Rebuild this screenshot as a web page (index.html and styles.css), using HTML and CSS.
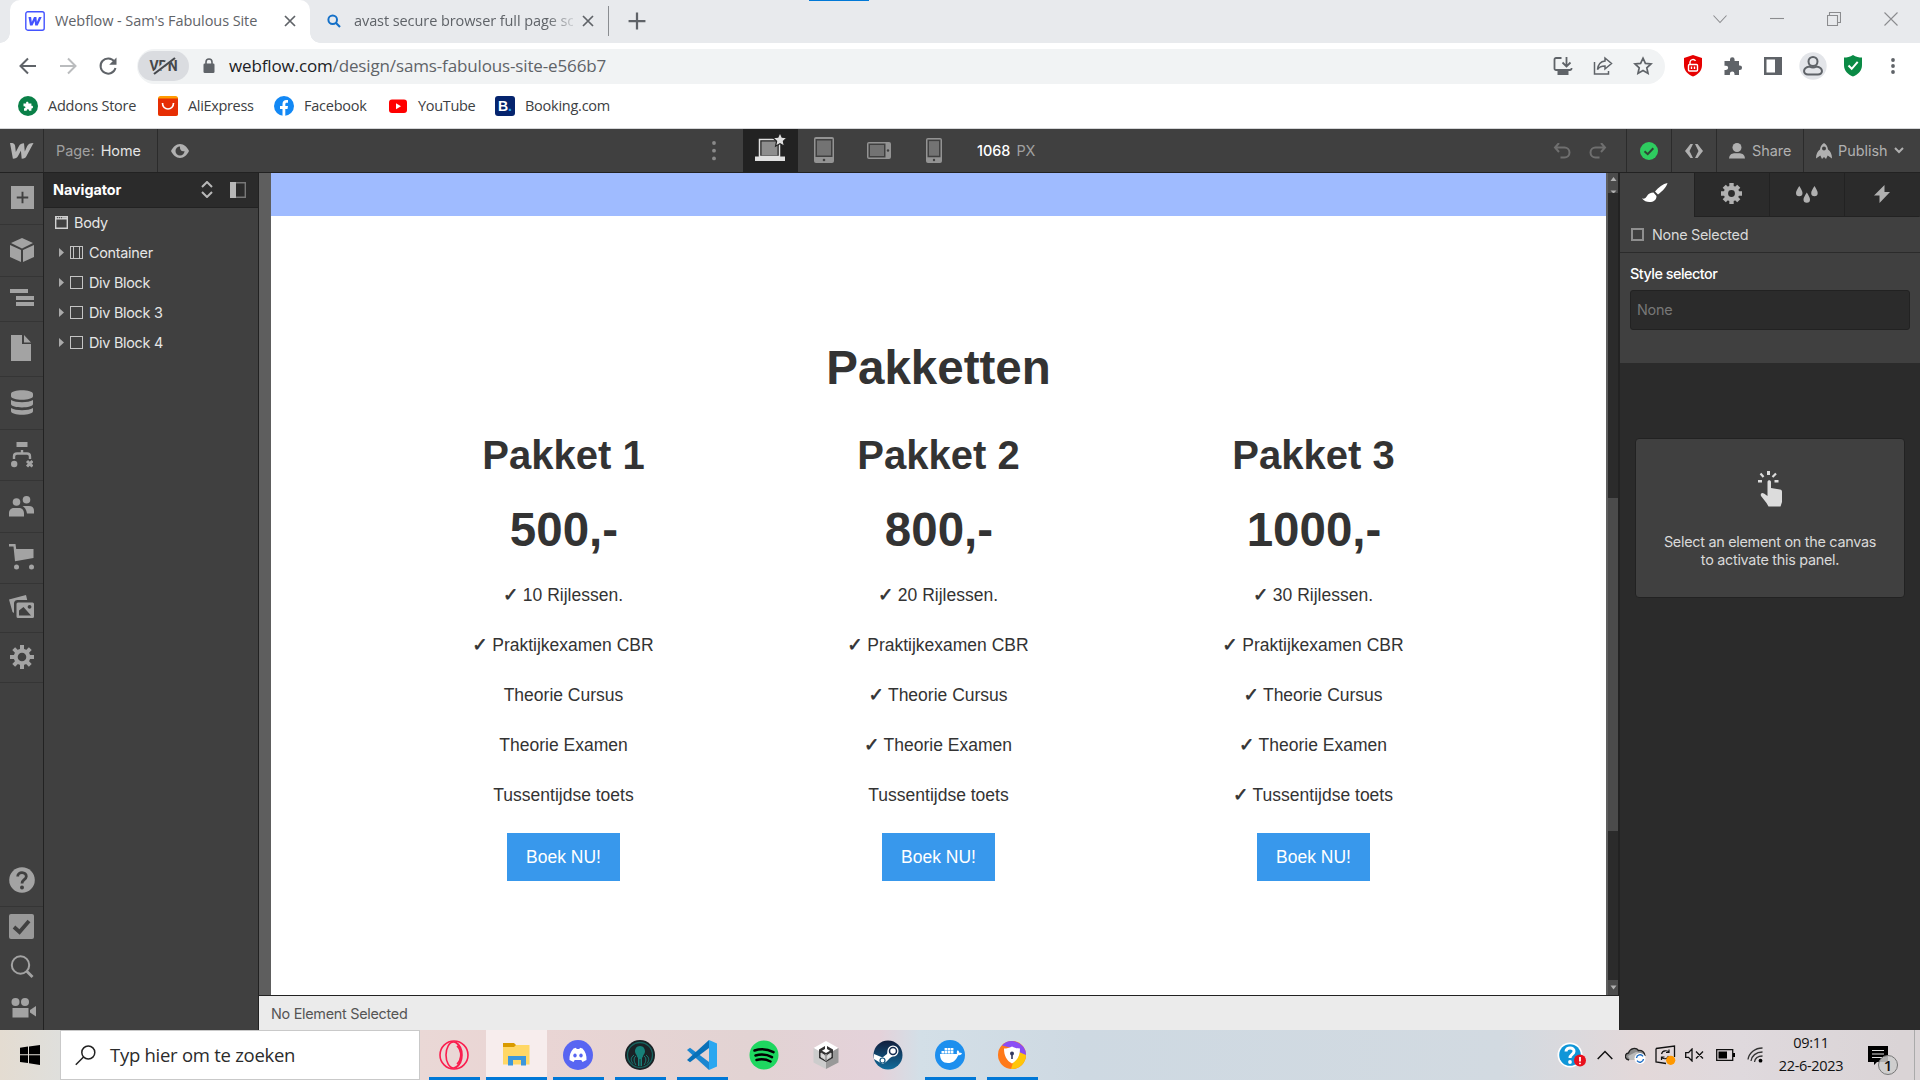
FILE: index.html
```html
<!DOCTYPE html>
<html lang="nl">
<head>
<meta charset="utf-8">
<title>Webflow - Sam's Fabulous Site</title>
<link rel="stylesheet" href="styles.css">
</head>
<body>
<div class="screen">
  <header class="browser">
    <div class="tabstrip">
      <div class="loading"></div>
      <div class="tab active">
        <svg class="favicon" width="20" height="20" viewBox="0 0 20 20"><rect x=".8" y=".8" width="18.4" height="18.4" rx="2" fill="#fff" stroke="#4353ff" stroke-width="1.4"/><path d="M3.500 6h2.600l.7 5L9 6h2.400l.5 5L14 6h2.700l-4 8.500h-2.500l-.6-4.500-2.100 4.500H5z" fill="#4353ff"/></svg>
        <span class="tab-title t-first">Webflow - Sam's Fabulous Site</span>
        <svg class="x" width="12" height="12" viewBox="0 0 12 12"><path d="M1 1l10 10M11 1L1 11" stroke="#5f6368" stroke-width="1.700"/></svg>
      </div>
      <div class="tab">
        <svg class="favicon" width="14" height="14" viewBox="0 0 14 14"><circle cx="5.700" cy="5.700" r="4.300" fill="none" stroke="#1470c8" stroke-width="2"/><path d="M9 9l4 4" stroke="#1470c8" stroke-width="2.200"/></svg>
        <span class="tab-title t-second">avast secure browser full page sc</span>
        <svg class="x" width="12" height="12" viewBox="0 0 12 12"><path d="M1 1l10 10M11 1L1 11" stroke="#5f6368" stroke-width="1.700"/></svg>
      </div>
      <svg class="newtab" width="16" height="16" viewBox="0 0 16 16"><path d="M8 .5v15M.5 8h15" stroke="#5f6368" stroke-width="2"/></svg>
      <div class="winctl">
        <svg width="14" height="14" viewBox="0 0 14 14"><path d="M.5 3.500l6.500 7 6.500-7"/></svg>
        <svg width="14" height="14" viewBox="0 0 14 14"><path d="M0 6.500h14"/></svg>
        <svg width="14" height="14" viewBox="0 0 14 14"><path d="M.5 3.500h10v10h-10zM2.500 3.500v-3h11v10h-3"/></svg>
        <svg width="14" height="14" viewBox="0 0 14 14"><path d="M.5.5l13 13M13.500.5l-13 13"/></svg>
      </div>
    </div>

    <div class="navbar">
      <div class="navbtns">
        <svg width="20" height="20" viewBox="0 0 20 20" fill="none" stroke="#5f6368" stroke-width="2"><path d="M18 10H3M10 2.500L2.500 10l7.500 7.500"/></svg>
        <svg width="20" height="20" viewBox="0 0 20 20" fill="none" stroke="#babcbe" stroke-width="2"><path d="M2 10h15M10 2.500l7.500 7.500-7.500 7.500"/></svg>
        <svg width="20" height="20" viewBox="0 0 20 20"><path d="M16.300 5.500A7.600 7.600 0 1 0 17.500 12" fill="none" stroke="#5f6368" stroke-width="2"/><path d="M18.500 1.500v7.300h-7.300z" fill="#5f6368"/></svg>
      </div>
      <div class="omnibox">
        <div class="vpn"><span>VPN</span><svg width="28" height="20" viewBox="0 0 28 20"><path d="M3 18L24 1" stroke="#dadce0" stroke-width="4"/><path d="M4 18L25 2" stroke="#45484c" stroke-width="2.200"/></svg></div>
        <svg class="lock" width="12" height="16" viewBox="0 0 12 16"><rect x=".5" y="5.500" width="11" height="9.500" rx="1.300" fill="#5f6368"/><path d="M3 6V4a3 3 0 0 1 6 0v2" fill="none" stroke="#5f6368" stroke-width="1.600"/></svg>
        <span class="url"><b>webflow.com</b>/design/sams-fabulous-site-e566b7</span>
        <div class="cells">
          <i><svg width="20" height="20" viewBox="0 0 20 20" fill="none" stroke="#5f6368" stroke-width="1.800"><path d="M8.500 2H3a1.500 1.500 0 0 0-1.500 1.500v9A1.500 1.500 0 0 0 3 14h14a1.500 1.500 0 0 0 1.500-1.500V12"/><path d="M4.500 17h11" stroke-width="4"/><path d="M13.500 1v9M9.500 6.500l4 4 4-4"/></svg></i>
          <i><svg width="20" height="20" viewBox="0 0 20 20" fill="none" stroke="#5f6368" stroke-width="1.500"><path d="M1.500 6v12h14v-3"/><path d="M12 2l6.500 5.500L12 13V10C8 10 6 11 4.500 13.500 5 9 7.500 5.500 12 5z"/></svg></i>
          <i><svg width="20" height="20" viewBox="0 0 20 20"><path d="M10 2.200l2.400 5.200 5.600.6-4.200 3.800 1.200 5.600-5-2.900-5 2.900 1.200-5.600L2 8l5.600-.6z" fill="none" stroke="#5f6368" stroke-width="1.700"/></svg></i>
        </div>
      </div>
      <div class="cells ext">
        <i><svg width="20" height="22" viewBox="0 0 20 22"><path d="M10 0l9 3v7c0 6-4 9.500-9 11.500C5 19.500 1 16 1 10V3z" fill="#e60000"/><rect x="5.500" y="9.500" width="9" height="6.500" rx="1" fill="none" stroke="#fff" stroke-width="1.400"/><path d="M7 9V7a3 2.800 0 0 1 5.500-1.200M8.500 11.500v2.500M11.500 11.500v2.500" fill="none" stroke="#fff" stroke-width="1.400"/></svg></i>
        <i><svg width="20" height="20" viewBox="0 0 20 20"><path d="M2 5h5V3.500a2.300 2.300 0 0 1 4.600 0V5H16v4.500h.8a2.200 2.200 0 0 1 0 4.500H16v5h-4.500v-1.200a2.300 2.300 0 0 0-4.600 0V19H1.500v-5H3a2.100 2.100 0 0 0 0-4.300H1.500V5z" fill="#5f6368"/></svg></i>
        <i><svg width="18" height="18" viewBox="0 0 18 18"><path d="M0 0h18v18H0zM2.500 2.500v13h8.500v-13z" fill="#5f6368" fill-rule="evenodd"/></svg></i>
        <i><svg width="28" height="28" viewBox="0 0 28 28"><circle cx="14" cy="14" r="13.700" fill="#e3e5e9"/><g fill="none" stroke="#5f6368" stroke-width="2"><circle cx="14" cy="9.500" r="4.500"/><path d="M10.500 14.500C3 16 4 22.500 9 22.500h10c5 0 6-6.500-1.500-8-2.500 1.500-4.500 1.500-7 0z"/></g></svg></i>
        <i><svg width="20" height="22" viewBox="0 0 20 22"><path d="M10 0C7 2 4 2.500 1 2.500V10c0 6 4 9.500 9 11.500 5-2 9-5.500 9-11.500V2.500C16 2.500 13 2 10 0z" fill="#0a8a45"/><path d="M5.500 10.500l3.200 3.300 6-7" fill="none" stroke="#fff" stroke-width="2"/></svg></i>
        <i><svg width="6" height="18" viewBox="0 0 6 18" fill="#5f6368"><circle cx="3" cy="3" r="1.900"/><circle cx="3" cy="9" r="1.900"/><circle cx="3" cy="15" r="1.900"/></svg></i>
      </div>
    </div>

    <div class="bookmarks">
      <div class="bm b1"><svg width="20" height="20" viewBox="0 0 20 20"><circle cx="10" cy="10" r="10" fill="#0a8048"/><path d="M5.500 7.500h2.700c-1-2.500 3-2.500 2.200 0h3v2.400c2.200-.5 2.200 3 0 2.500v2.400h-2.400c.3-2-2.600-2-2.300 0H6v-2.600c2 .3 2-2.300-.5-2z" fill="#fff"/></svg><span>Addons Store</span></div>
      <div class="bm b2"><svg width="20" height="20" viewBox="0 0 20 20"><rect width="20" height="20" rx="2.500" fill="#ff9b00"/><path d="M0 2.500h20v15a2.500 2.500 0 0 1-2.500 2.500h-15A2.500 2.500 0 0 1 0 17.500z" fill="#e62e04"/><path d="M4.500 7c0 8 11 8 11 0" fill="none" stroke="#fff" stroke-width="1.700"/></svg><span>AliExpress</span></div>
      <div class="bm b3"><svg width="20" height="20" viewBox="0 0 20 20"><circle cx="10" cy="10" r="10" fill="#1288f5"/><path d="M8.500 20v-7H6v-3h2.500V8c0-2.700 1.600-4 3.800-4 .9 0 1.700.1 1.700.1v2.600h-1.200c-1.100 0-1.500.7-1.500 1.400V10h2.700l-.5 3h-2.200v7z" fill="#fff"/></svg><span>Facebook</span></div>
      <div class="bm b4"><svg width="20" height="20" viewBox="0 0 20 20"><rect x="1" y="3.500" width="18" height="13.500" rx="3" fill="#f00"/><path d="M8 7.200v6l5-3z" fill="#fff"/></svg><span>YouTube</span></div>
      <div class="bm b5"><div class="booking">B<em>.</em></div><span>Booking.com</span></div>
    </div>
  </header>

  <div class="topbar">
    <div class="cell logo"><svg width="24" height="16" viewBox="0 0 24 16"><path d="M0 0c3.500-.5 5 1 5.200 3.500L5.800 9 9 3C10 1 11.500.2 14 .2l.8 8.300L17 3.500C18 1 20 0 23.500 0l-7 13c-.8 1.700-2 2.700-4.800 2.800l-.8-8-3 5.500c-.8 1.600-2.200 2.500-5 2.500z" fill="#b5b5b5"/></svg></div>
    <div class="cell page"><span class="dim">Page:</span><span class="home">Home</span></div>
    <svg class="eye" width="18" height="14" viewBox="0 0 18 14"><path d="M9 0c4 0 7 3 9 7-2 4-5 7-9 7s-7-3-9-7c2-4 5-7 9-7zm0 2.500A4.500 4.500 0 1 0 13.500 7C11 8 8.500 6 9 2.500z" fill="#b0b0b0" fill-rule="evenodd"/></svg>
    <svg class="dots" width="4" height="22" viewBox="0 0 4 22" fill="#8a8a8a"><circle cx="2" cy="3" r="1.900"/><circle cx="2" cy="10.700" r="1.900"/><circle cx="2" cy="18.400" r="1.900"/></svg>
    <div class="devices">
      <div class="dev on"><svg width="32" height="32" viewBox="0 0 32 32"><path d="M5.500 7.500h20v17h-20z" fill="#222" stroke="#e0e0e0" stroke-width="1.500"/><path d="M7.500 9.500h16v14h-16z" fill="#8e8e8e"/><path d="M1 24.500h30v4.500H1z" fill="#e0e0e0"/><path d="M26 .5l2.100 4.600 5 .6-3.700 3.500 1 5L26 11.700l-4.400 2.500 1-5-3.700-3.500 5-.6z" fill="#e0e0e0" stroke="#222" stroke-width="1.200"/></svg></div>
      <div class="dev"><svg width="22" height="28" viewBox="0 0 22 28"><rect x="1" y="1" width="20" height="26" rx="2" fill="#939393"/><path d="M2.500 3h17v18h-17z" fill="#404040"/><path d="M4 4.500h14v15H4z" fill="#737373"/><circle cx="11" cy="24" r="1.300" fill="#404040"/></svg></div>
      <div class="dev"><svg width="24" height="17" viewBox="0 0 24 17"><rect width="24" height="17" rx="2" fill="#939393"/><path d="M1.500 1.500h17v14h-17z" fill="#404040"/><path d="M3 3h14v11H3z" fill="#737373"/><circle cx="21" cy="8.500" r="1.200" fill="#404040"/></svg></div>
      <div class="dev"><svg width="16" height="25" viewBox="0 0 16 24" preserveAspectRatio="none"><rect width="16" height="24" rx="2" fill="#939393"/><path d="M1.500 1.500h13v17h-13z" fill="#404040"/><path d="M3 3h10v14H3z" fill="#737373"/><circle cx="8" cy="21" r="1.200" fill="#404040"/></svg></div>
    </div>
    <div class="width"><b>1068</b><span class="dim">PX</span></div>
    <div class="history">
      <svg width="18" height="16" viewBox="0 0 18 16"><path d="M2 4.500h9.500a5 5 0 0 1 0 10H7.500M6 0L2 4.500 6 9" fill="none" stroke="#6f6f6f" stroke-width="2"/></svg>
      <svg width="18" height="16" viewBox="0 0 18 16"><path d="M16 4.500H6.500a5 5 0 0 0 0 10h4M12 0l4 4.500L12 9" fill="none" stroke="#6f6f6f" stroke-width="2"/></svg>
    </div>
    <div class="cell ok"><svg width="18" height="18" viewBox="0 0 18 18"><circle cx="9" cy="9" r="9" fill="#2ecc5f"/><path d="M4.500 9.200l3.200 3 5.600-6" fill="none" stroke="#2f4535" stroke-width="2"/></svg></div>
    <div class="cell code"><svg width="18" height="14" viewBox="0 0 18 14"><path d="M5.500 0H8L4.500 7 8 14H5.500L0 7zM12.500 0H10l3.500 7-3.500 7h2.500L18 7z" fill="#b0b0b0"/></svg></div>
    <div class="cell share"><svg width="16" height="16" viewBox="0 0 16 16" fill="#b0b0b0"><circle cx="8" cy="4.500" r="4.500"/><path d="M0 15.500c.5-4 2.500-5 5-5.300h6c2.500.3 4.500 1.300 5 5.300z"/></svg><span>Share</span></div>
    <div class="cell publish"><svg width="16" height="16" viewBox="0 0 16 16"><path d="M8 0c2.500 1.500 3.700 3.500 4 6.500 2.500 1.500 4 4.500 4 9l-4.300-3L10 16l-2-2-2 2-1.700-3.500-4.300 3c0-4.500 1.500-7.500 4-9C4.300 3.500 5.500 1.500 8 0zm0 3.500a2 2 0 0 0 0 4 2 2 0 0 0 0-4z" fill="#b0b0b0" fill-rule="evenodd"/></svg><span>Publish</span><svg width="10" height="7" viewBox="0 0 10 7"><path d="M1 1l4 4 4-4" fill="none" stroke="#b0b0b0" stroke-width="2"/></svg></div>
  </div>

  <main class="work">
    <nav class="rail">
      <div class="r1"><svg width="23" height="23" viewBox="0 0 24 24"><path d="M0 0h24v24H0zM11 6v5H6v2h5v5h2v-5h5v-2h-5V6z" fill-rule="evenodd"/></svg></div>
      <div class="r2"><svg width="24" height="24" viewBox="0 0 24 24"><path d="M12 0l11 5-11 5.500L1 5zM0 7l11 5v12L0 19zM24 7l-11 5v12l11-5z"/></svg></div>
      <div class="r3"><svg width="24" height="18" viewBox="0 0 24 18"><path d="M0 0h18v4H0zM6 7h18v4H6zM6 13h18v4H6z"/></svg></div>
      <div class="r4"><svg width="20" height="26" viewBox="0 0 20 26"><path d="M0 0h11v9h9v17H0zM13 0l7 7.500h-7z"/></svg></div>
      <div class="r5"><svg width="22" height="25" viewBox="0 0 22 25"><path d="M0 4c0-5 22-5 22 0v2c0 5-22 5-22 0zM0 10c5 3 17 3 22 0v4c0 4.500-22 4.500-22 0zM0 18c5 3 17 3 22 0v3c0 5-22 5-22 0z"/></svg></div>
      <div class="r6"><svg width="22" height="26" viewBox="0 0 22 26"><path d="M5.500 0h11v5h-11z"/><path d="M3 17v-2.500c0-2 1-3 3-3h10c2 0 3 1 3 3V17M11 8v3" fill="none" stroke="#a3a3a3" stroke-width="2.400"/><circle cx="3.200" cy="22" r="3.200"/><path d="M16 19l5.500 5.500M21.500 19L16 24.500" stroke="#a3a3a3" stroke-width="3"/></svg></div>
      <div class="r7"><svg width="26" height="21" viewBox="0 0 26 21"><circle cx="7.500" cy="6" r="3.800"/><circle cx="17.500" cy="3.800" r="3.800"/><path d="M0 20.500v-3c0-4 2.500-5.500 5-5.500h5c2.500 0 5 1.500 5 5.500v3zM13.500 10H20c3.500 0 5 2 5 5v2.500h-7C17.500 14 16 11.500 13.500 10z"/></svg></div>
      <div class="r8"><svg width="26" height="26" viewBox="0 0 26 26"><path d="M0 0h6.500l.7 5H24.500v9L6 17.300 4.500 2.500H0z"/><circle cx="7.500" cy="23" r="2.500"/><circle cx="22.500" cy="23" r="2.500"/></svg></div>
      <div class="r9"><svg width="26" height="24" viewBox="0 0 26 24"><path d="M0 4.500L17 0l1.200 5H9.500C6 5 5 6.500 5 9v9L3.500 17z"/><path d="M9 7.500h14.500A1.500 1.500 0 0 1 25 9v12.500a1.500 1.500 0 0 1-1.500 1.500H9a1.500 1.500 0 0 1-1.500-1.500V9A1.500 1.500 0 0 1 9 7.500zM10 20.500h12l-7.500-8.500L10 15.500zM20.500 10a1.900 1.900 0 1 0 .1 0z" fill-rule="evenodd"/></svg></div>
      <div class="r10"><svg width="24" height="24" viewBox="0 0 24 24"><circle cx="12" cy="12" r="6.300" fill="none" stroke="#a3a3a3" stroke-width="4"/><path d="M12 0v5M12 19v5M0 12h5M19 12h5M3.700 3.700L7 7M17 17l3.300 3.300M3.700 20.300L7 17M17 7l3.300-3.300" stroke="#a3a3a3" stroke-width="4"/></svg></div>
      <div class="rhelp"><svg width="26" height="26" viewBox="0 0 26 26"><circle cx="13" cy="13" r="12.800"/><path d="M8.700 9.500c0-5.500 8.800-5 8.600 0-.2 3.500-4.300 3-4.300 7" fill="none" stroke="#404040" stroke-width="2.800"/><circle cx="13" cy="20.500" r="2" fill="#404040"/></svg></div>
      <div class="raud"><svg width="25" height="25" viewBox="0 0 25 25"><rect width="25" height="25" rx="2" fill="#999"/><path d="M5 13l5.500 5L20 7" fill="none" stroke="#404040" stroke-width="3.800"/></svg></div>
      <div class="rsearch"><svg width="24" height="24" viewBox="0 0 24 24" stroke="#a3a3a3"><circle cx="10.500" cy="10" r="8.700" stroke-width="2"/><path d="M16.500 16l6 6" stroke-width="2.800"/></svg></div>
      <div class="rcam"><svg width="26" height="20" viewBox="0 0 26 20"><circle cx="4.500" cy="4" r="4"/><circle cx="14" cy="4" r="4"/><path d="M1.500 10h16v9.500h-16zM19 12l6-4v10.500l-6-4z"/></svg></div>
    </nav>

    <aside class="navigator">
      <div class="nav-head"><b>Navigator</b>
        <svg class="updown" width="12" height="17" viewBox="0 0 12 17"><path d="M1 6l5-5 5 5M1 11l5 5 5-5" fill="none" stroke="#b8b8b8" stroke-width="2"/></svg>
        <svg width="16" height="16" viewBox="0 0 16 16"><path d="M0 0h6v16H0z" fill="#b8b8b8"/><path d="M6 .7h9.300v14.600H6" fill="none" stroke="#777" stroke-width="1.400"/></svg>
      </div>
      <div class="node root"><svg width="13" height="13" viewBox="0 0 13 13"><path d="M.7.7h11.600v11.600H.7z" fill="none" stroke="#d0d0d0" stroke-width="1.400"/><path d="M1 1.500h11v2H1z" fill="#d0d0d0"/><path d="M2 1.700h1M4 1.700h1M6 1.700h1" stroke="#404040"/></svg>Body</div>
      <div class="node"><svg class="arr" width="5" height="9" viewBox="0 0 5 9"><path d="M0 0l5 4.500L0 9z" fill="#aaa"/></svg><span class="box container"></span>Container</div>
      <div class="node"><svg class="arr" width="5" height="9" viewBox="0 0 5 9"><path d="M0 0l5 4.500L0 9z" fill="#aaa"/></svg><span class="box"></span>Div Block</div>
      <div class="node"><svg class="arr" width="5" height="9" viewBox="0 0 5 9"><path d="M0 0l5 4.500L0 9z" fill="#aaa"/></svg><span class="box"></span>Div Block 3</div>
      <div class="node"><svg class="arr" width="5" height="9" viewBox="0 0 5 9"><path d="M0 0l5 4.500L0 9z" fill="#aaa"/></svg><span class="box"></span>Div Block 4</div>
    </aside>

    <section class="stage">
      <div class="viewport">
        <div class="site">
          <div class="band"></div>
          <h1 class="title">Pakketten</h1>
          <div class="packs">
            <div class="pack"><h2>Pakket 1</h2><h1>500,-</h1>
              <p><i>✓</i> 10 Rijlessen.</p><p><i>✓</i> Praktijkexamen CBR</p><p>Theorie Cursus</p><p>Theorie Examen</p><p>Tussentijdse toets</p><a class="btn">Boek NU!</a></div>
            <div class="pack"><h2>Pakket 2</h2><h1>800,-</h1>
              <p><i>✓</i> 20 Rijlessen.</p><p><i>✓</i> Praktijkexamen CBR</p><p><i>✓</i> Theorie Cursus</p><p><i>✓</i> Theorie Examen</p><p>Tussentijdse toets</p><a class="btn">Boek NU!</a></div>
            <div class="pack"><h2>Pakket 3</h2><h1>1000,-</h1>
              <p><i>✓</i> 30 Rijlessen.</p><p><i>✓</i> Praktijkexamen CBR</p><p><i>✓</i> Theorie Cursus</p><p><i>✓</i> Theorie Examen</p><p><i>✓</i> Tussentijdse toets</p><a class="btn">Boek NU!</a></div>
          </div>
        </div>
        <div class="scroll">
          <div class="up"><svg width="11" height="20" viewBox="0 0 11 20" fill="#b0b0b0"><path d="M2.500 8L5.500 4l3 4zM2.500 17.500h6l-3 3z"/></svg></div>
          <div class="thumb"></div>
          <div class="down"><svg width="11" height="15" viewBox="0 0 11 15"><path d="M2.500 5.500h6l-3 4z" fill="#b0b0b0"/></svg></div>
        </div>
      </div>
      <div class="status">No Element Selected</div>
    </section>

    <aside class="style">
      <div class="stabs">
        <div class="on"><svg width="26" height="20" viewBox="0 0 26 20" fill="#fff"><path d="M25.500 0c-1 4-5 8-9.500 11.500L13 8.500C16.500 4 21 1 25.500 0zM11.500 9.500l3 3.500c0 4-3 6-7 6-3 0-5.500-1-7.500-3.500 2.500.5 4-.5 5-2.500 1.200-2.200 3.500-3.500 6.500-3.500z"/></svg></div>
        <div><svg width="21" height="21" viewBox="0 0 24 24"><circle cx="12" cy="12" r="6.400" fill="none" stroke="#b0b0b0" stroke-width="5"/><path d="M12 0v5M12 19v5M0 12h5M19 12h5M3.700 3.700L7 7M17 17l3.300 3.300M3.700 20.300L7 17M17 7l3.300-3.300" stroke="#b0b0b0" stroke-width="5"/></svg></div>
        <div><svg width="22" height="18" viewBox="0 0 22 18" fill="#b0b0b0"><path d="M3.300 1C5 4 6.500 6 6.500 8a3.200 3.200 0 0 1-6.500 0c0-2 1.500-4 3.300-7zM18.500 1c1.700 3 3.200 5 3.200 7a3.200 3.200 0 0 1-6.500 0c0-2 1.500-4 3.300-7zM10.800 7.500c1.700 3 3.200 5 3.200 7a3.200 3.200 0 0 1-6.500 0c0-2 1.500-4 3.300-7z"/></svg></div>
        <div><svg width="16" height="18" viewBox="0 0 16 18"><path d="M10.500 0v7H16L5.500 18v-7.500H0z" fill="#b0b0b0"/></svg></div>
      </div>
      <div class="none-row"><span class="box grey"></span>None Selected</div>
      <div class="selector"><div class="label">Style selector</div><div class="field">None</div></div>
      <div class="hint">
        <svg width="25" height="36" viewBox="0 0 25 36" fill="#dcdcdc"><path d="M9 0h3v4H9zM0 9h4v2.500H0zM16.500 9h4v2.500h-4z"/><path d="M2.500 2.500L5.500 6M18 2.500L14.500 6" stroke="#dcdcdc" stroke-width="2.200"/><path d="M9.500 11c0-2.500 3.500-2.500 3.500 0v6l9 1.500c1.500.3 2 1 2 2.500V31l-1.500 4.500H10.500L8.500 32 3 25c-1-2.500 1-4 3-2.500l3.500 2.500z"/></svg>
        <p>Select an element on the canvas<br>to activate this panel.</p>
      </div>
    </aside>
  </main>

  <footer class="taskbar">
    <div class="start"><svg width="20" height="20" viewBox="0 0 20 20"><path d="M0 2.800L8 1.600v7.700H0zM9 1.500L20 0v9.300H9zM0 10.300h8V18L0 16.900zM9 10.300h11V20L9 18.200z"/></svg></div>
    <div class="search"><svg width="21" height="21" viewBox="0 0 21 21" fill="none" stroke="#222" stroke-width="1.500"><circle cx="13.300" cy="7.500" r="6.500"/><path d="M8.500 12L.8 19.800"/></svg><span>Typ hier om te zoeken</span></div>
    <div class="apps">
      <div class="app run"><svg viewBox="0 0 30 30" fill="none" stroke="#fa1e4e" stroke-width="1.600"><circle cx="15" cy="15" r="14"/><ellipse cx="14.500" cy="15" rx="7.500" ry="13"/><path d="M17 2.500c8 5 8 20 0 25M18 6c5 5 5 13 0 18"/></svg></div>
      <div class="app run active"><svg viewBox="0 0 30 30"><path d="M2 3h11l3 3v4H2z" fill="#d99a00"/><path d="M2 7h11l2-2h13.500v19.500H2z" fill="#ffd766"/><path d="M7 25.500V16h18v9.500h-5V20h-8v5.500z" fill="#3d97dc"/></svg></div>
      <div class="app run"><svg viewBox="0 0 30 30"><circle cx="15" cy="15" r="15" fill="#5865f2"/><path d="M10.500 8.500l2.500-.7.7 1.200h2.600l.7-1.200 2.500.7c3 3 4.300 7 4 11.500l-4 2-1.200-2h-6.600l-1.200 2-4-2c-.3-4.500 1-8.500 4-11.500z" fill="#fff"/><ellipse cx="12" cy="15.500" rx="1.700" ry="2" fill="#5865f2"/><ellipse cx="18" cy="15.500" rx="1.700" ry="2" fill="#5865f2"/></svg></div>
      <div class="app run"><svg viewBox="0 0 30 30"><circle cx="15" cy="15" r="15" fill="#1b2226"/><circle cx="15" cy="15" r="12.500" fill="none" stroke="#17635e" stroke-width="1.300"/><path d="M15 6c3.500 0 5 3 5 5.500 0 2.500-2 3-2 5l-1 1.500v8h-1.500v-7h-1v7H13v-8l-1-1.500c0-2-2-2.500-2-5C10 9 11.500 6 15 6z" fill="#178079"/><path d="M11 16c-3 2-2 6 0 9M19 16c3 2 2 6 0 9M9 15c-4 3-3 6-1 8.500M21 15c4 3 3 6 1 8.500" fill="none" stroke="#178079"/></svg></div>
      <div class="app run"><svg viewBox="0 0 30 30"><path d="M22 0l8 3.500v23L22 30z" fill="#2aa7f0"/><path d="M0 10l3-2.300L22 22v8z" fill="#1a86d0"/><path d="M0 20l3 2.300L22 8V0z" fill="#0870b8"/></svg></div>
      <div class="app"><svg viewBox="0 0 30 30"><circle cx="15" cy="15" r="14.500" fill="#1ed760"/><path d="M5.500 10.500c6-2 13-1.500 19 1.700M6.500 15.500c5.500-1.500 11.500-1 16.500 1.700M7.500 20c5-1.300 9.500-.8 14 1.500" fill="none" stroke="#000" stroke-width="2.500" stroke-linecap="round"/></svg></div>
      <div class="app"><svg viewBox="0 0 30 30"><path d="M15 1l12.500 7L15 15 2.500 8z" fill="#fff"/><path d="M2.500 8L15 15v14L2.500 22.500z" fill="#ccc"/><path d="M27.500 8L15 15v14l12.500-6.500z" fill="#999"/><path d="M14 6l-6 3.500v8.500l7 4 7-4V9.500L16 6v3l3 1.700-4 2.300-4-2.300L14 9z" fill="#333"/><path d="M15 14v7M10 13l4 2.500v4L10 17zM20 13l-4 2.500v4l4-2.500z" fill="#ddd" stroke="#ccc"/></svg></div>
      <div class="app"><svg viewBox="0 0 30 30"><defs><linearGradient id="steam" x2="0" y2="1"><stop stop-color="#111d3c"/><stop offset="1" stop-color="#116c9b"/></linearGradient></defs><circle cx="15" cy="15" r="14.500" fill="url(#steam)"/><path d="M1 14l8.500 3.500L14 14l1-5 8 5-6 4-3.500 3.500L10 24l-4-2-5-3z" fill="#fff"/><circle cx="20" cy="11" r="5.500" fill="#fff"/><circle cx="20" cy="11" r="3.500" fill="#fff" stroke="#142c50" stroke-width="1.500"/><circle cx="9.500" cy="20.500" r="2.500" fill="none" stroke="#135780" stroke-width="1.200"/></svg></div>
      <div class="app run"><svg viewBox="0 0 30 30"><circle cx="15" cy="15" r="15" fill="#1d8fee"/><path d="M5 14h17c-.5-2 0-3 .8-3.700 1 .7 1.500 1.500 1.500 2.500 1 0 2 0 2.700.7-1 1.500-2.500 1.700-3.800 1.700C21 20.500 17.500 23 13 23c-5 0-8-3-8-9zM6.500 11h2.600v2.500H6.500zM9.600 11h2.600v2.500H9.600zM12.700 11h2.600v2.500h-2.600zM15.800 11h2.600v2.500h-2.600zM9.600 8h2.600v2.500H9.600zM12.700 8h2.600v2.500h-2.600zM15.800 8h2.600v2.500h-2.600z" fill="#fff"/></svg></div>
      <div class="app run"><svg viewBox="0 0 30 30"><circle cx="15" cy="15" r="14" fill="#ff7a1a"/><path d="M5 5.500A14 14 0 0 1 29 15l-8 2L15 8z" fill="#8a4df5"/><path d="M29 15A14 14 0 0 1 14 29L17 20l5-8z" fill="#ffc60a"/><path d="M15 6.500c3 1.500 5 2 8 2 0 7-2.500 12-8 15-5.500-3-8-8-8-15 3 0 5-.5 8-2z" fill="#fff"/><circle cx="15" cy="13.500" r="2" fill="#333a60"/><path d="M14.200 14h1.600v5h-1.600z" fill="#333a60"/></svg></div>
    </div>
    <div class="tray">
      <svg class="q" width="29" height="27" viewBox="0 0 29 27"><circle cx="13" cy="13" r="12.500" fill="#fff"/><circle cx="13" cy="13" r="10.800" fill="#0f96d8"/><path d="M9 9.500c0-5 8.500-4.500 8 0-.3 3-4 3-4 6.500" fill="none" stroke="#fff" stroke-width="3"/><circle cx="13" cy="20" r="1.900" fill="#fff"/><circle cx="23" cy="18.500" r="6" fill="#e8101c"/><path d="M23 15v4.500M23 20.700v1.600" stroke="#fff" stroke-width="1.800"/></svg>
      <svg class="chev" width="16" height="10" viewBox="0 0 16 10"><path d="M.7 9L8 1.500 15.300 9" fill="none" stroke="#111" stroke-width="1.500"/></svg>
      <svg class="cloud" width="21" height="18" viewBox="0 0 21 18"><path d="M4 14C-1 13-.5 7.500 3.500 7 5 2 11 1 13.500 4.500 17 4 20 6.500 20 10" fill="#8b8b8b" stroke="#222" stroke-width="1.300"/><path d="M3 10l8-4 5 1-5 7H5z" fill="#bbb"/><circle cx="15" cy="12.500" r="5.500" fill="#fff"/><path d="M11.500 12a3.600 3.600 0 0 1 6.500-1.700M18.500 13A3.600 3.600 0 0 1 12 14.700" fill="none" stroke="#1769c4" stroke-width="1.400"/></svg>
      <svg class="upd" width="21" height="20" viewBox="0 0 21 20"><path d="M1 3.500L19.500 1v11M1 3.500V17l10 1.500" fill="none" stroke="#111" stroke-width="1.300"/><path d="M6.500 9c1-4 6-4 7.500-1.500M14 4.500v3h-3M13.500 11c-1 3.500-5.500 3.500-7 1M6.500 15v-3h3" fill="none" stroke="#111" stroke-width="1.200"/><circle cx="15.700" cy="15.300" r="4.600" fill="#ff9800"/></svg>
      <svg class="snd" width="19" height="14" viewBox="0 0 19 14"><path d="M.7 4.700h2.800L7 1v12L3.500 9.300H.7zM11 3.500l7 7M18 3.500l-7 7" fill="none" stroke="#111" stroke-width="1.300"/></svg>
      <svg class="bat" width="19" height="12" viewBox="0 0 19 12"><path d="M.7.7h16v10.600H.7z" fill="none" stroke="#111" stroke-width="1.300"/><path d="M2.500 2.500h8.500v7H2.500zM17 4h2v4h-2z"/></svg>
      <svg class="wifi" width="16" height="16" viewBox="0 0 16 16"><path d="M1 12.500C2 6 8 1 15.500 1M4 14C4.500 9 9 5 15.500 5M7.500 15c.5-3.500 3.500-6 8-6" fill="none" stroke="#333" stroke-width="1.300"/><circle cx="13.500" cy="13.700" r="1.900"/></svg>
      <div class="clock"><span>09:11</span><span class="date">22-6-2023</span></div>
      <div class="notif"><svg width="20" height="19" viewBox="0 0 20 19"><path d="M0 0h20v16H9l-3 3v-3H0z"/><path d="M4 4.500h12M4 8h12M4 11.500h12" stroke="#ddd" stroke-width="1.200"/></svg><span>1</span></div>
    </div>
    <div class="peek"></div>
  </footer>
</div>
</body>
</html>
```

FILE: styles.css
```css
* { box-sizing: border-box; }
body { margin: 0; font-family: "Open Sans", sans-serif; }
svg { display: block; flex: none; }
h1, h2, p { margin: 0; }
.screen { width: 1920px; height: 1080px; display: flex; flex-direction: column; overflow: hidden; }

/* Browser chrome */
.browser { height: 129px; background: #fff; border-bottom: 1px solid #d5d6d8; flex: none; }
.tabstrip { position: relative; height: 43px; background: #e8eaed; display: flex; align-items: center; padding-left: 10px; }
.loading { position: absolute; left: 809px; top: 0; width: 60px; height: 1px; background: #0078d7; }
.tab { display: flex; align-items: center; width: 298px; height: 43px; padding: 0 14px 2px 16px; font-size: 14.500px; color: #5f6368; }
.tab.active { position: relative; width: 300px; padding-left: 15px; background: #fff; border-radius: 10px 10px 0 0; }
.tab.active::before, .tab.active::after { content: ""; position: absolute; bottom: 0; width: 10px; height: 10px; }
.tab.active::before { left: -10px; background: radial-gradient(circle at 0 0, #e8eaed 9.500px, #fff 10px); }
.tab.active::after { right: -10px; background: radial-gradient(circle at 100% 0, #e8eaed 9.500px, #fff 10px); }
.tab:not(.active) { width: 298px; padding: 0 14px 2px 17px; }
.tab-title { white-space: nowrap; line-height: 22px; letter-spacing: -.08px; }
.t-first { margin-left: 10px; }
.t-second { margin-left: 13px; width: 219px; -webkit-mask: linear-gradient(90deg, #000 88%, transparent 103%); mask: linear-gradient(90deg, #000 88%, transparent 103%); }
.x { margin-left: auto; }
.newtab { margin: -2px 0 0; width: 38px; padding-left: 19px; border-left: 1px solid #8a8d91; height: 30px; }
.winctl { margin-left: auto; display: flex; gap: 43px; padding: 0 22px 6px 0; }
.winctl svg { fill: none; stroke: #8b8c8f; stroke-width: 1.100; }
.navbar { height: 45px; display: flex; align-items: center; padding-top: 1px; }
.navbtns { display: flex; gap: 20px; padding-left: 18px; width: 137px; }
.omnibox { width: 1528px; height: 35px; border-radius: 18px; background: #f1f3f4; display: flex; align-items: center; padding: 0 2px 0 1px; }
.vpn { position: relative; width: 51px; height: 30px; border-radius: 15px; background: #dadce0; display: flex; align-items: center; justify-content: center; font: 700 14px Roboto, sans-serif; color: #45484c; }
.vpn svg { position: absolute; left: 12px; top: 5px; }
.lock { margin: 0 14px 0 14px; }
.url { font-size: 17px; color: #5f6368; letter-spacing: -.14px; line-height: 24px; }
.url b { font-weight: 400; color: #202124; }
.cells { display: flex; margin-left: auto; }
.cells i { width: 40px; height: 30px; display: flex; align-items: center; justify-content: center; }
.ext { margin-left: 8px; }
.bookmarks { height: 40px; display: flex; align-items: center; padding: 0 0 4px 18px; }
.bm { display: flex; align-items: center; gap: 10px; font-size: 14.500px; color: #3c4043; letter-spacing: -.25px; white-space: nowrap; }
.bm span { margin-top: -1px; }
.b1 { width: 140px; } .b2 { width: 116px; } .b3 { width: 114px; } .b4 { width: 107px; }
.b2, .b4 { letter-spacing: -.33px; }
.booking { width: 20px; height: 20px; border-radius: 3px; background: #05246e; color: #fff; font: 700 14px/20px "Liberation Sans", sans-serif; text-align: center; letter-spacing: 0; }
.booking em { color: #22a6f2; font-style: normal; }

/* Designer top bar */
.topbar, .work { font-family: Inter, sans-serif; font-size: 14.400px; letter-spacing: 0; }
.topbar { height: 44px; background: #404040; border-bottom: 1px solid #222; display: flex; align-items: center; color: #b0b0b0; flex: none; }
.cell { height: 43px; border-left: 1px solid #2b2b2b; display: flex; align-items: center; }
.logo { width: 43px; border: 0; padding-left: 10px; }
.page { width: 115px; padding-left: 12px; border-right: 1px solid #2b2b2b; gap: 6px; }
.dim { color: #a0a0a0; }
.home { color: #e4e4e4; }
.eye { margin-left: 13px; }
.dots { margin-left: 523px; }
.devices { display: flex; margin-left: 27px; }
.dev { width: 55px; height: 43px; display: flex; align-items: center; justify-content: center; padding: 0 3px 1px 0; }
.dev.on { background: #222; padding: 0 1px 0 0; }
.dev.on svg { overflow: visible; margin-top: -6px; }
.width { margin-left: 14px; display: flex; gap: 6px; width: 140px; }
.width b { font-weight: 500; color: #fff; }
.history { margin-left: auto; display: flex; gap: 18px; margin-right: 19px; }
.ok { width: 45px; justify-content: center; }
.code { width: 45px; justify-content: center; }
.share { width: 87px; padding-left: 12px; gap: 7px; }
.publish { width: 117px; padding-left: 12px; gap: 6px; }

/* Left rail */
.work { height: 857px; display: flex; flex: none; letter-spacing: -.28px; }
.rail { width: 44px; background: #404040; border-right: 1px solid #222; display: flex; flex-direction: column; }
.rail svg { fill: #a3a3a3; }
.rail div { width: 43px; display: flex; align-items: center; justify-content: center; border-bottom: 1px solid #353535; flex: none; padding-bottom: 2px; }
.r1 { height: 52px; } .r2 { height: 52px; } .r3 { height: 45px; } .r4 { height: 55px; } .r5 { height: 53px; }
.r6 { height: 51px; } .r7 { height: 52px; } .r8 { height: 51px; } .r9 { height: 49px; } .r10 { height: 50px; }
.rail .r1 { padding: 0 0 3px 1px; }
.rail .r4 { padding: 0 1px 3px 0; }
.rail .r6, .rail .r7 { padding-bottom: 1px; }
.rail .rhelp { height: 54px; margin-top: auto; padding: 0; }
.rail .raud, .rail .rsearch, .rail .rcam { border: 0; }
.raud { height: 40px; } .rsearch { height: 41px; } .rail .rcam { height: 42px; padding: 0 0 3px 4px; }
.rail .rsearch svg { fill: none; }

/* Navigator */
.navigator { width: 215px; background: #404040; border-right: 1px solid #222; color: #e6e6e6; }
.nav-head { height: 35px; background: #2b2b2b; border-bottom: 1px solid #222; display: flex; align-items: center; padding: 0 12px 1px 9px; }
.nav-head b { font-weight: 700; color: #fff; margin-right: auto; letter-spacing: -.05px; }
.updown { margin-right: 17px; }
.node { height: 30px; display: flex; align-items: center; padding: 0 0 1px 15px; }
.root { padding-left: 11px; gap: 6px; }
.arr { margin-right: 6px; }
.box { width: 13px; height: 13px; border: 1px solid #c4c4c4; margin-right: 6px; }
.container { background: linear-gradient(90deg, transparent 2px, #c4c4c4 2px 3px, transparent 3px 8px, #c4c4c4 8px 9px, transparent 9px); }

/* Canvas */
.stage { width: 1360px; display: flex; flex-direction: column; }
.viewport { height: 823px; background: #5e5e5e; padding-left: 12px; display: flex; border-bottom: 1px solid #222; }
.site { width: 1335px; background: #fff; color: #333; font-family: "Liberation Sans", Arial, sans-serif; letter-spacing: 0; text-align: center; }
.band { height: 43px; background: #9fbbff; margin-bottom: 124px; }
.site h1 { font-size: 47.500px; line-height: 55px; }
.site h2 { font-size: 40px; line-height: 45px; margin-bottom: 24px; }
.packs { display: flex; justify-content: center; margin-top: 38px; }
.pack { width: 375px; }
.pack h1 { margin-bottom: 26px; padding-left: 1px; }
.pack p { font-size: 17.500px; line-height: 25px; margin-bottom: 25px; }
.pack i { display: inline-block; width: 14px; font: 400 18.500px/20px "DejaVu Sans", sans-serif; text-align: center; text-indent: -1px; -webkit-text-stroke: .6px #333; }
.btn { display: inline-block; height: 48px; padding: 0 19px; background: #3898ec; color: #fff; font-size: 17.500px; line-height: 48px; }
.scroll { width: 13px; border-left: 2px solid #5e5e5e; border-right: 1px solid #222; background: #2b2b2b; display: flex; flex-direction: column; }
.up { height: 20px; background: #4b4b4b; }
.thumb { height: 333px; margin-top: 305px; background: #4b4b4b; }
.down { height: 15px; margin-top: auto; background: #4b4b4b; }
.status { height: 34px; background: #ebebeb; padding-left: 12px; line-height: 36px; color: #555; }

/* Style panel */
.style { width: 301px; border-left: 1px solid #222; background: #2b2b2b; color: #d9d9d9; }
.stabs { display: flex; height: 44px; }
.stabs div { width: 75px; border-left: 1px solid #222; border-bottom: 1px solid #222; display: flex; align-items: center; justify-content: center; padding: 0 1px 2px 0; }
.stabs .on { width: 74px; background: #404040; border: 0; padding: 0 4px 5px 0; }
.none-row { height: 36px; background: #404040; border-bottom: 1px solid #2b2b2b; display: flex; align-items: center; padding: 0 0 1px 11px; }
.none-row .box { border: 2px solid #8f8f8f; margin-right: 8px; }
.selector { height: 110px; background: #404040; padding: 11px 10px; }
.label { color: #fff; line-height: 20px; letter-spacing: -.5px; font-weight: 500; }
.field { margin-top: 6px; height: 40px; border: 1px solid #222; border-radius: 3px; background: #2b2b2b; color: #777; line-height: 38px; padding-left: 6px; }
.hint { margin: 75px 15px 0; height: 160px; border: 1px solid #222; border-radius: 4px; background: #404040; text-align: center; line-height: 18px; padding-top: 32px; }
.hint svg { margin: 0 auto 26px; }

/* Taskbar */
.taskbar { height: 50px; display: flex; position: relative; background: linear-gradient(90deg, #e4dcd1 0, #dfdfdc 60px, #ead8d6 420px, #ead5d4 520px, #e2d3d3 750px, #e4d2da 880px, #d3dfe7 920px, #ced9e2 1080px, #d2dae1 1500px, #e3d8d9 1640px, #dfd9dd 1740px, #dad4d6 1900px); color: #111; flex: none; }
.start { width: 60px; padding: 15px 0 0 20px; }
.search { width: 360px; background: #fff; border: 1px solid #c9c9c9; display: flex; align-items: center; padding-left: 14px; gap: 14px; font-size: 18.500px; letter-spacing: -.27px; color: #2b2b2b; }
.search span { margin-top: -2px; }
.apps { display: flex; padding-left: 3px; }
.app { width: 62px; height: 50px; position: relative; display: flex; align-items: center; justify-content: center; }
.app svg { width: 30px; height: 30px; }
.app.run::after { content: ""; position: absolute; left: 6px; right: 5px; bottom: 0; height: 3px; background: #0078d7; }
.app.active { background: linear-gradient(90deg, transparent 1px, #f7eded 1px); }
.app.active::after { left: 1px; right: 0; }
.tray { position: absolute; left: 1557px; top: 0; height: 50px; display: flex; align-items: center; }
.chev { margin-left: 11px; } .cloud { margin-left: 12px; } .upd { margin-left: 9px; } .snd { margin-left: 9px; } .bat { margin-left: 12px; } .wifi { margin-left: 12px; }
.clock { margin-left: 12px; width: 72px; display: flex; flex-direction: column; align-items: center; font-size: 14.500px; line-height: 23px; letter-spacing: -.32px; padding-bottom: 2px; }
.notif { position: relative; margin-left: 21px; }
.notif span { position: absolute; left: 10px; top: 9px; width: 20px; height: 20px; border-radius: 50%; border: 1px solid #777; background: #ccccccd9; font-size: 15px; font-weight: 600; line-height: 18px; text-align: center; }
.peek { position: absolute; right: 5px; top: 0; width: 1px; height: 50px; background: #aaa; }
```
